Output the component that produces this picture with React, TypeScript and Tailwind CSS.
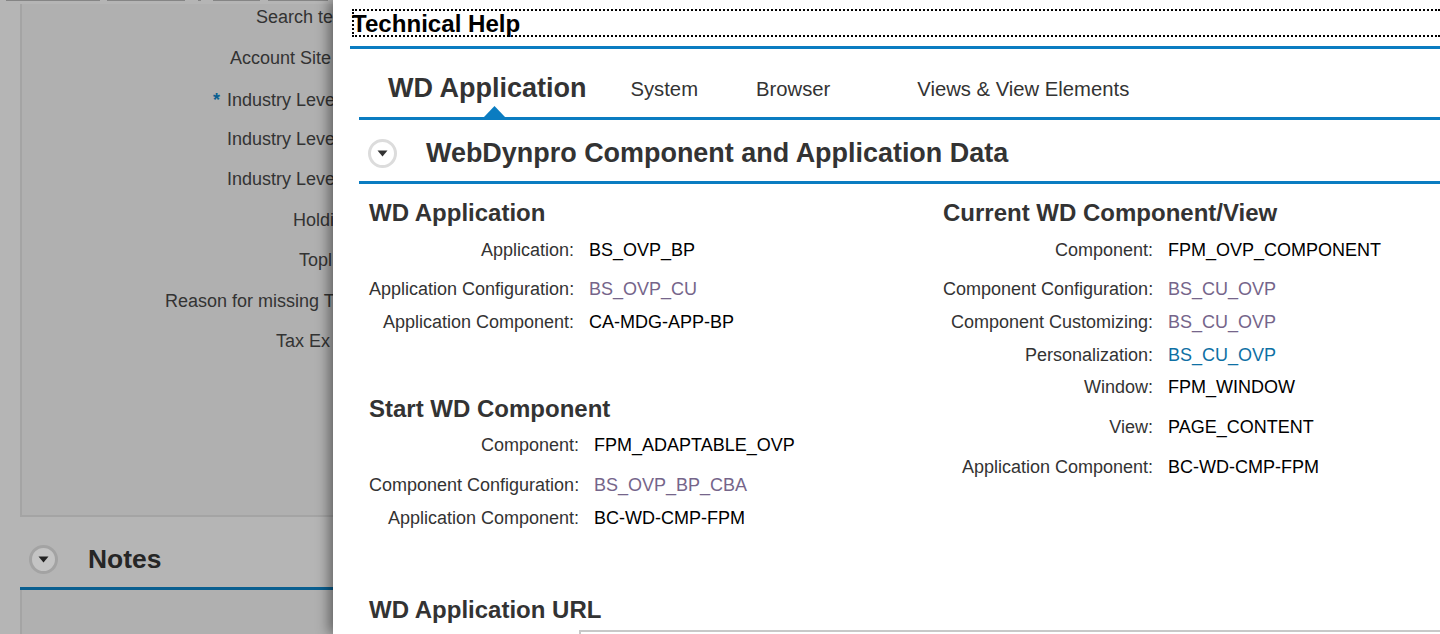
import React from 'react';

type Field = {
    label: string;
    value: string;
    height: string;
    tone?: 'visited' | 'link';
};

// the dialog covers the rest of these labels
const leftLabels = [
    { text: 'Search te', cls: 'h-[41px] pl-[256px]' },
    { text: 'Account Site', cls: 'h-[42px] pl-[230px]' },
    { text: 'Industry Leve', cls: 'h-[39px] pl-[227px]', required: true },
    { text: 'Industry Leve', cls: 'h-[40px] pl-[227px]' },
    { text: 'Industry Leve', cls: 'h-[41px] pl-[227px]' },
    { text: 'Holdi', cls: 'h-[40px] pl-[293px]' },
    { text: 'Topl', cls: 'h-[41px] pl-[299px]' },
    { text: 'Reason for missing T', cls: 'h-[40px] pl-[165px]' },
    { text: 'Tax Ex', cls: 'h-[40px] pl-[276px]' },
];

const appFields: Field[] = [
    { label: 'Application:', value: 'BS_OVP_BP', height: 'h-[39px]' },
    { label: 'Application Configuration:', value: 'BS_OVP_CU', height: 'h-[33px]', tone: 'visited' },
    { label: 'Application Component:', value: 'CA-MDG-APP-BP', height: 'h-[33px]' },
];

const startFields: Field[] = [
    { label: 'Component:', value: 'FPM_ADAPTABLE_OVP', height: 'h-[40px]' },
    { label: 'Component Configuration:', value: 'BS_OVP_BP_CBA', height: 'h-[33px]', tone: 'visited' },
    { label: 'Application Component:', value: 'BC-WD-CMP-FPM', height: 'h-[33px]' },
];

const currentFields: Field[] = [
    { label: 'Component:', value: 'FPM_OVP_COMPONENT', height: 'h-[39px]' },
    { label: 'Component Configuration:', value: 'BS_CU_OVP', height: 'h-[33px]', tone: 'visited' },
    { label: 'Component Customizing:', value: 'BS_CU_OVP', height: 'h-[33px]', tone: 'visited' },
    { label: 'Personalization:', value: 'BS_CU_OVP', height: 'h-[32px]', tone: 'link' },
    { label: 'Window:', value: 'FPM_WINDOW', height: 'h-[40px]' },
    { label: 'View:', value: 'PAGE_CONTENT', height: 'h-[40px]' },
    { label: 'Application Component:', value: 'BC-WD-CMP-FPM', height: 'h-[33px]' },
];

const CollapseIcon: React.FC<{ dim?: boolean }> = ({ dim }) => (
    <div
        className={`flex h-[29px] w-[29px] shrink-0 items-center justify-center rounded-full border-[3px] ${
            dim ? 'border-[#a3a3a3] bg-[#c4c4c4]' : 'border-[#dcdcdc] bg-white'
        }`}
    >
        <svg width="11" height="7" viewBox="0 0 11 7">
            <path d="M0.5 0.5H10.5L5.5 6.5Z" fill={dim ? '#222222' : '#333333'} />
        </svg>
    </div>
);

const FieldList: React.FC<{ fields: Field[]; labelWidth: string }> = ({ fields, labelWidth }) => (
    <div>
        {fields.map((field) => (
            <div key={field.label} className={`flex items-start leading-[22px] ${field.height}`}>
                <div className={`shrink-0 whitespace-nowrap text-right text-[#333333] ${labelWidth}`}>{field.label}</div>
                <div
                    className={`ml-[15px] whitespace-nowrap ${
                        field.tone === 'visited' ? 'text-[#75658a]' : field.tone === 'link' ? 'text-[#0e70a4]' : 'text-black'
                    }`}
                >
                    {field.value}
                </div>
            </div>
        ))}
    </div>
);

const GroupTitle: React.FC<{ children: React.ReactNode }> = ({ children }) => (
    <h3 className="h-[40px] text-[24px] font-bold leading-[28px] text-[#333333]">{children}</h3>
);

export default function App() {
    return (
        <div className="flex h-[634px] w-[1440px] overflow-hidden bg-white font-['Liberation_Sans',Arial,sans-serif] text-[18px]">
            {/* page behind the dialog, dimmed */}
            <div className="flex w-[333px] shrink-0 flex-col overflow-hidden bg-[#b5b5b5] text-[#333333]">
                <div className="flex h-[4px] shrink-0 items-start pl-[6px]">
                    <div className="h-px w-[94px] bg-[#858585]" />
                    <div className="ml-[7px] h-px w-[78px] bg-[#858585]" />
                    <div className="ml-[13px] h-px w-[3px] bg-[#858585]" />
                    <div className="ml-[12px] h-px w-[47px] bg-[#858585]" />
                    <div className="ml-[8px] h-px w-[60px] bg-[#858585]" />
                </div>
                <div className="ml-[20px] h-[513px] shrink-0 border-b-2 border-l-2 border-[#a4a4a4] bg-[#b0b0b0] pt-[2px]">
                    {leftLabels.map((row, i) => (
                        <div key={i} className={`relative -ml-[22px] whitespace-nowrap leading-[22px] ${row.cls}`}>
                            {row.required && <span className="absolute left-[213px] top-0 font-bold text-[#0a5f90]">*</span>}
                            {row.text}
                        </div>
                    ))}
                </div>
                <div className="ml-[20px] flex h-[73px] shrink-0 items-center border-b-[3px] border-[#0a5f90] pl-[9px] pt-[14px]">
                    <CollapseIcon dim />
                    <h2 className="ml-[30px] mt-[2px] text-[26.4px] font-bold text-[#262626]">Notes</h2>
                </div>
                <div className="ml-[20px] flex-1 border-l-2 border-[#a4a4a4] bg-[#b0b0b0]" />
            </div>

            {/* technical help dialog */}
            <div className="relative z-10 flex-1 overflow-hidden bg-white shadow-[-4px_0_12px_rgba(0,0,0,0.45)]">
                <div className="ml-[19px] mt-[9px] h-[28px] border-y-2 border-l-2 border-dotted border-black text-[24.1px] font-bold leading-[26px] text-black">
                    <span className="-ml-[2px] inline-block">Technical Help</span>
                </div>
                <div className="ml-[17px] mt-[9px] h-[3px] bg-[#0a7cc1]" />

                <div className="ml-[26px]">
                    <div className="relative flex h-[71px] items-center border-b-[3px] border-[#0a7cc1] pl-[29px] pt-[11px] text-[20.25px] text-[#333333]">
                        <span className="text-[27px] font-bold">WD Application</span>
                        <span className="ml-[44px] mt-[2px]">System</span>
                        <span className="ml-[58px] mt-[2px]">Browser</span>
                        <span className="ml-[87px] mt-[2px]">Views &amp; View Elements</span>
                        <svg className="absolute bottom-0 left-[125px]" width="21" height="11" viewBox="0 0 21 11">
                            <path d="M0 11L10.5 0L21 11Z" fill="#0a7cc1" />
                        </svg>
                    </div>
                    <div className="flex h-[64px] items-center border-b-[3px] border-[#0a7cc1] pl-[9px] pt-[5px]">
                        <CollapseIcon />
                        <h2 className="ml-[29px] text-[26.95px] font-bold text-[#333333]">WebDynpro Component and Application Data</h2>
                    </div>

                    <div className="flex pt-[15px]">
                        <div className="w-[584px] shrink-0 pl-[10px]">
                            <GroupTitle>WD Application</GroupTitle>
                            <FieldList fields={appFields} labelWidth="w-[205px]" />
                            <div className="h-[51px]" />
                            <GroupTitle>Start WD Component</GroupTitle>
                            <div className="-mt-[1px]">
                                <FieldList fields={startFields} labelWidth="w-[210px]" />
                            </div>
                        </div>
                        <div>
                            <GroupTitle>Current WD Component/View</GroupTitle>
                            <FieldList fields={currentFields} labelWidth="w-[210px]" />
                        </div>
                    </div>

                    <div className="pl-[10px] pt-[56px]">
                        <GroupTitle>WD Application URL</GroupTitle>
                        <div className="-mt-[6px] ml-[210px] h-[20px] border-l-2 border-t-2 border-[#c8c8c8]" />
                    </div>
                </div>
            </div>
        </div>
    );
}
